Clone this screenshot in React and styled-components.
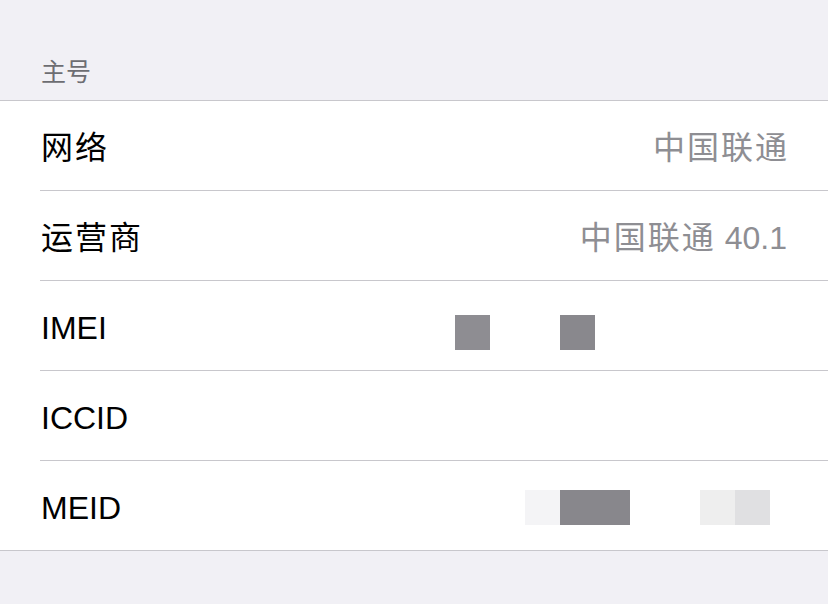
import styled, { createGlobalStyle } from "styled-components";

const GlobalStyle = createGlobalStyle`
  html, body {
    margin: 0;
    padding: 0;
    background: #f1f0f5;
    font-family: "Liberation Sans", "Noto Sans CJK SC", sans-serif;
  }
`;

const Page = styled.div`
  width: 828px;
  height: 604px;
  background: #f1f0f5;
  overflow: hidden;
`;

const SectionHeader = styled.div`
  height: 101px;
  box-sizing: border-box;
  padding: 0 0 12px 41px;
  display: flex;
  align-items: flex-end;
  font-size: 25px;
  color: #6d6d72;
  border-bottom: 1px solid #c8c7cc;
`;

const Group = styled.div`
  background: #fff;
  border-bottom: 1px solid #c8c7cc;
`;

const Row = styled.div`
  position: relative;
  padding-left: 40px;
`;

const RowInner = styled.div`
  height: ${({ $last }) => ($last ? 89 : 90)}px;
  box-sizing: border-box;
  padding: 4px 41px 0 1px;
  display: flex;
  align-items: center;
  justify-content: space-between;
  border-bottom: ${({ $last }) => ($last ? "none" : "1px solid #c8c7cc")};
  font-size: 32px;
`;

const Label = styled.span`
  color: #000;
  line-height: 1;
  margin-top: ${({ $cjk }) => ($cjk ? 1 : 0)}px;
`;

const Value = styled.span`
  color: #8e8e93;
  line-height: 1;
  margin-top: 1px;
  margin-right: ${({ $trail }) => $trail}px;
`;

const Cjk = styled.span`
  letter-spacing: 2px;
`;

const Redact = styled.div`
  position: absolute;
  left: ${({ $x }) => $x}px;
  top: ${({ $y }) => $y}px;
  width: ${({ $w }) => $w}px;
  height: 35px;
  background: ${({ $c }) => $c};
`;

const rows = [
  { label: <Cjk>网络</Cjk>, cjk: true, value: <Cjk>中国联通</Cjk>, trail: -2 },
  {
    label: <Cjk>运营商</Cjk>,
    cjk: true,
    value: (
      <>
        <Cjk>中国联通</Cjk> 40.1
      </>
    ),
    trail: 0,
  },
  {
    label: "IMEI",
    blocks: [
      { x: 455, w: 35, c: "#8e8d92" },
      { x: 560, w: 35, c: "#89888d" },
    ],
    y: 34,
  },
  { label: "ICCID" },
  {
    label: "MEID",
    blocks: [
      { x: 525, w: 35, c: "#f4f4f6" },
      { x: 560, w: 70, c: "#88878c" },
      { x: 700, w: 35, c: "#eeeeee" },
      { x: 735, w: 35, c: "#e0e0e2" },
    ],
    y: 29,
  },
];

export default function App() {
  return (
    <Page>
      <GlobalStyle />
      <SectionHeader>主号</SectionHeader>
      <Group>
        {rows.map((r, i) => (
          <Row key={i}>
            <RowInner $last={i === rows.length - 1}>
              <Label $cjk={r.cjk}>{r.label}</Label>
              {r.value && <Value $trail={r.trail}>{r.value}</Value>}
            </RowInner>
            {r.blocks &&
              r.blocks.map((b) => (
                <Redact key={b.x} $x={b.x} $y={r.y} $w={b.w} $c={b.c} />
              ))}
          </Row>
        ))}
      </Group>
    </Page>
  );
}
